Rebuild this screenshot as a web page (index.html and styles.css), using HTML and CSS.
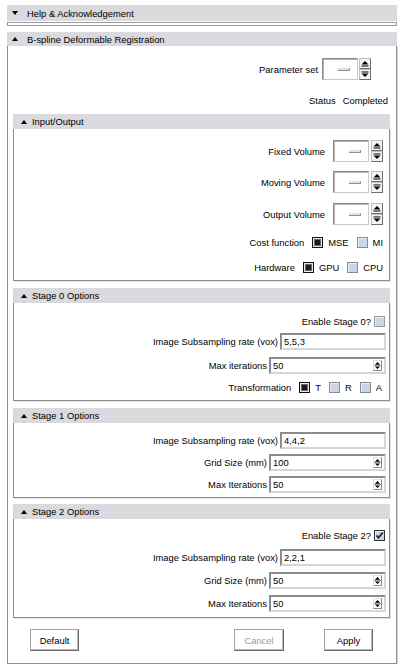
FILE: index.html
```html
<!DOCTYPE html>
<html>
<head>
<meta charset="utf-8">
<link rel="stylesheet" href="styles.css">
</head>
<body>
<div class="page">
  <div class="hdr hdr-help"><span class="tri tri-down"></span><span>Help &amp; Acknowledgement</span></div>
  <div class="collapsed"></div>

  <div class="hdr hdr-main"><span class="tri tri-up"></span><span>B-spline Deformable Registration</span></div>
  <div class="frame outer">
    <div class="row r-param">
      <span class="lbl gap4">Parameter set</span>
      <div class="vsel">
        <div class="vbox"><span class="vbar"></span></div>
        <div class="varrows">
          <span class="abtn"><svg width="10" height="9" viewBox="0 0 10 9"><path d="M1.5 5.5h7L5 2z" fill="#000"/><path d="M1.5 7h7" stroke="#000"/></svg></span>
          <span class="abtn"><svg width="10" height="9" viewBox="0 0 10 9"><path d="M1.5 3.5h7L5 7z" fill="#000"/><path d="M1.5 2h7" stroke="#000"/></svg></span>
        </div>
      </div>
    </div>
    <div class="row r-status"><span>Status</span><span class="status-val">Completed</span></div>

    <div class="section s-io">
      <div class="hdr hdr-sub"><span class="tri tri-up"></span><span>Input/Output</span></div>
      <div class="frame inner io-body">
        <div class="row r-vol">
          <span class="lbl gap8">Fixed Volume</span>
          <div class="vsel wide">
            <div class="vbox"><span class="vbar"></span></div>
            <div class="varrows">
              <span class="abtn"><svg width="10" height="9" viewBox="0 0 10 9"><path d="M1.5 5.5h7L5 2z" fill="#000"/><path d="M1.5 7h7" stroke="#000"/></svg></span>
              <span class="abtn"><svg width="10" height="9" viewBox="0 0 10 9"><path d="M1.5 3.5h7L5 7z" fill="#000"/><path d="M1.5 2h7" stroke="#000"/></svg></span>
            </div>
          </div>
        </div>
        <div class="row r-vol m7">
          <span class="lbl gap8">Moving Volume</span>
          <div class="vsel wide">
            <div class="vbox"><span class="vbar"></span></div>
            <div class="varrows">
              <span class="abtn"><svg width="10" height="9" viewBox="0 0 10 9"><path d="M1.5 5.5h7L5 2z" fill="#000"/><path d="M1.5 7h7" stroke="#000"/></svg></span>
              <span class="abtn"><svg width="10" height="9" viewBox="0 0 10 9"><path d="M1.5 3.5h7L5 7z" fill="#000"/><path d="M1.5 2h7" stroke="#000"/></svg></span>
            </div>
          </div>
        </div>
        <div class="row r-vol m8">
          <span class="lbl gap8">Output Volume</span>
          <div class="vsel wide">
            <div class="vbox"><span class="vbar"></span></div>
            <div class="varrows">
              <span class="abtn"><svg width="10" height="9" viewBox="0 0 10 9"><path d="M1.5 5.5h7L5 2z" fill="#000"/><path d="M1.5 7h7" stroke="#000"/></svg></span>
              <span class="abtn"><svg width="10" height="9" viewBox="0 0 10 9"><path d="M1.5 3.5h7L5 7z" fill="#000"/><path d="M1.5 2h7" stroke="#000"/></svg></span>
            </div>
          </div>
        </div>
        <div class="row r-opt m9">
          <span class="lbl gap8">Cost function</span>
          <span class="radio on"><span class="dot"></span></span><span class="rtxt">MSE</span>
          <span class="radio next"></span><span class="rtxt">MI</span>
        </div>
        <div class="row r-opt m11">
          <span class="lbl gap8">Hardware</span>
          <span class="radio on"><span class="dot"></span></span><span class="rtxt">GPU</span>
          <span class="radio next"></span><span class="rtxt">CPU</span>
        </div>
      </div>
    </div>

    <div class="section s-st">
      <div class="hdr hdr-sub"><span class="tri tri-up"></span><span>Stage 0 Options</span></div>
      <div class="frame inner st0-body">
        <div class="row r-opt pr1">
          <span class="lbl gap3">Enable Stage 0?</span><span class="check"></span>
        </div>
        <div class="row r-in m5">
          <span class="lbl gap2">Image Subsampling rate (vox)</span>
          <div class="txt">5,5,3</div>
        </div>
        <div class="row r-in m7">
          <span class="lbl gap2">Max iterations</span>
          <div class="txt spin"><span class="val">50</span><span class="sarr"><svg width="8" height="11" viewBox="0 0 8 11"><path d="M1 4.5h6L4 1.5z M1 6.5h6L4 9.5z" fill="#000"/><path d="M0 5.5h8" stroke="#8a8a8a"/></svg></span></div>
        </div>
        <div class="row r-opt m6 pr4">
          <span class="lbl gap8">Transformation</span>
          <span class="radio on"><span class="dot"></span></span><span class="rtxt">T</span>
          <span class="radio next"></span><span class="rtxt">R</span>
          <span class="radio next"></span><span class="rtxt">A</span>
        </div>
      </div>
    </div>

    <div class="section s-st">
      <div class="hdr hdr-sub"><span class="tri tri-up"></span><span>Stage 1 Options</span></div>
      <div class="frame inner st1-body">
        <div class="row r-in">
          <span class="lbl gap2">Image Subsampling rate (vox)</span>
          <div class="txt">4,4,2</div>
        </div>
        <div class="row r-in m5">
          <span class="lbl gap2">Grid Size (mm)</span>
          <div class="txt spin"><span class="val">100</span><span class="sarr"><svg width="8" height="11" viewBox="0 0 8 11"><path d="M1 4.5h6L4 1.5z M1 6.5h6L4 9.5z" fill="#000"/><path d="M0 5.5h8" stroke="#8a8a8a"/></svg></span></div>
        </div>
        <div class="row r-in m5">
          <span class="lbl gap2">Max Iterations</span>
          <div class="txt spin"><span class="val">50</span><span class="sarr"><svg width="8" height="11" viewBox="0 0 8 11"><path d="M1 4.5h6L4 1.5z M1 6.5h6L4 9.5z" fill="#000"/><path d="M0 5.5h8" stroke="#8a8a8a"/></svg></span></div>
        </div>
      </div>
    </div>

    <div class="section s-st2">
      <div class="hdr hdr-sub"><span class="tri tri-up"></span><span>Stage 2 Options</span></div>
      <div class="frame inner st2-body">
        <div class="row r-opt pr1">
          <span class="lbl gap3">Enable Stage 2?</span><span class="check on"><svg width="9" height="9" viewBox="0 0 9 9"><path d="M1.5 4.5l2 2.2L7.8 1.5" fill="none" stroke="#1c2430" stroke-width="1.8"/></svg></span>
        </div>
        <div class="row r-in m7">
          <span class="lbl gap2">Image Subsampling rate (vox)</span>
          <div class="txt">2,2,1</div>
        </div>
        <div class="row r-in m6">
          <span class="lbl gap2">Grid Size (mm)</span>
          <div class="txt spin"><span class="val">50</span><span class="sarr"><svg width="8" height="11" viewBox="0 0 8 11"><path d="M1 4.5h6L4 1.5z M1 6.5h6L4 9.5z" fill="#000"/><path d="M0 5.5h8" stroke="#8a8a8a"/></svg></span></div>
        </div>
        <div class="row r-in m6">
          <span class="lbl gap2">Max Iterations</span>
          <div class="txt spin"><span class="val">50</span><span class="sarr"><svg width="8" height="11" viewBox="0 0 8 11"><path d="M1 4.5h6L4 1.5z M1 6.5h6L4 9.5z" fill="#000"/><path d="M0 5.5h8" stroke="#8a8a8a"/></svg></span></div>
        </div>
      </div>
    </div>

    <div class="buttons">
      <div class="btn">Default</div>
      <div class="btn btn-cancel disabled">Cancel</div>
      <div class="btn btn-apply">Apply</div>
    </div>
  </div>
</div>
</body>
</html>
```

FILE: styles.css
```css
* { box-sizing: border-box; }

body {
  margin: 0;
  background: #ffffff;
  font-family: "Liberation Sans", Arial, sans-serif;
  font-size: 9.4px;
  color: #000;
}

.page {
  width: 390px;
  margin-left: 7px;
  padding-top: 5px;
}

/* headers */
.hdr {
  display: flex;
  align-items: center;
  height: 15px;
  background: #dadade;
  white-space: nowrap;
}
.hdr-help { height: 16px; padding-left: 5px; }
.hdr-main { height: 14px; margin-top: 6px; padding-left: 5px; }
.hdr-sub { padding-left: 8px; }

.tri {
  width: 0;
  height: 0;
  border-left: 3px solid transparent;
  border-right: 3px solid transparent;
  margin-right: 9px;
}
.hdr-sub .tri { margin-right: 5px; }
.tri-up { border-bottom: 4px solid #000; }
.tri-down { border-top: 4px solid #000; }

.collapsed {
  margin-top: 1px;
  height: 4px;
  border: 1px solid #9a9a9a;
}

/* frames */
.frame {
  border: 1px solid #8e8e8e;
  border-top: none;
}
.outer {
  padding: 11px 0 12px 0;
  box-shadow: 1px 1px 0 #d6d6d6;
}
.section { margin: 7px 6px 0 5px; }
.s-st2 { margin-top: 6px; }
.inner { box-shadow: 1px 1px 0 #e2e2e2; }

.io-body { padding: 10px 6px 6px 0; }
.st0-body { padding: 11px 3px 6px 0; }
.st1-body { padding: 9px 3px 4px 0; }
.st2-body { padding: 9px 3px 5px 0; }

/* rows */
.row {
  display: flex;
  align-items: center;
  justify-content: flex-end;
  white-space: nowrap;
}
.r-param { height: 24px; padding-right: 25px; }
.r-status { height: 14px; margin-top: 12px; padding-right: 8px; }
.status-val { margin-left: 7px; }
.r-vol { height: 24px; }
.r-opt { height: 14px; }
.r-in { height: 17px; }

.m5 { margin-top: 5px; }
.m6 { margin-top: 6px; }
.m7 { margin-top: 7px; }
.m8 { margin-top: 8px; }
.m9 { margin-top: 9px; }
.m11 { margin-top: 11px; }
.pr1 { padding-right: 1px; }
.pr4 { padding-right: 4px; }

.gap2 { margin-right: 2px; }
.gap3 { margin-right: 3px; }
.gap4 { margin-right: 4px; }
.gap8 { margin-right: 8px; }

/* volume selector */
.vsel { display: flex; align-items: flex-start; height: 22px; }
.vbox {
  width: 36px;
  height: 22px;
  border-style: solid;
  border-width: 1px;
  border-color: #8a8a8a #c8c8c8 #c8c8c8 #8a8a8a;
  box-shadow: inset 1px 1px 0 #b4b4b4;
  background: #fff;
  display: flex;
  align-items: center;
  justify-content: flex-end;
  padding-right: 7px;
}
.vbar {
  width: 12px;
  height: 3px;
  background: #e2e2e2;
  border-bottom: 1px solid #8e8e8e;
  border-right: 1px solid #8e8e8e;
}
.varrows {
  display: flex;
  flex-direction: column;
  margin-left: 1px;
}
.wide .varrows { margin-left: 2px; }
.abtn {
  width: 12px;
  height: 11px;
  display: flex;
  align-items: center;
  justify-content: center;
  border-style: solid;
  border-width: 1px;
  border-color: #c0c0c0 #6e6e6e #6e6e6e #c0c0c0;
  background: #f4f4f4;
}

/* radio-like squares */
.radio {
  width: 11px;
  height: 11px;
  border: 1px solid #8a8a8a;
  background: #cbd6e4;
  box-shadow: inset 1px 1px 0 #e8eef6;
  display: flex;
  align-items: center;
  justify-content: center;
  margin-right: 5px;
}
.radio.on {
  border: 1px solid #111;
  background: #eaeaea;
  box-shadow: none;
}
.radio.next { margin-left: 8px; }
.dot {
  width: 5px;
  height: 5px;
  background: #1a1a1a;
  box-shadow: 0 0 0 1px #6a6a6a;
}

/* checkbox */
.check {
  width: 11px;
  height: 11px;
  border: 1px solid #9a9a9a;
  background: #cbd6e4;
  box-shadow: inset 1px 1px 0 #e8eef6;
  display: flex;
  align-items: center;
  justify-content: center;
}
.check.on {
  border-color: #333;
  background: #c6d2e2;
}

/* text inputs */
.txt {
  width: 106px;
  height: 17px;
  border-style: solid;
  border-width: 2px 2px 2px 2px;
  border-color: #8c8c8c #d6d6d6 #d6d6d6 #8c8c8c;
  background: #fff;
  padding-left: 2px;
  display: flex;
  align-items: center;
}
.spin { width: 117px; padding-right: 2px; }
.val { flex: 1; }
.sarr {
  width: 9px;
  height: 11px;
  display: flex;
  align-items: center;
  justify-content: center;
  border-right: 1px solid #8a8a8a;
  border-bottom: 1px solid #8a8a8a;
  border-top: 1px solid #e0e0e0;
  border-left: 1px solid #e0e0e0;
}

/* buttons */
.buttons {
  display: flex;
  margin-top: 11px;
  padding: 0 23px 0 22px;
  height: 22px;
}
.btn {
  width: 49px;
  height: 22px;
  display: flex;
  align-items: center;
  justify-content: center;
  border-style: solid;
  border-width: 1px;
  border-color: #a4a4a4 #6a6a6a #6a6a6a #a4a4a4;
  box-shadow: inset -1px -1px 0 #b8b8b8;
  background: #fff;
}
.btn-cancel { width: 50px; margin-left: auto; color: #9a9a9a; }
.btn-apply { margin-left: 40px; }
```
